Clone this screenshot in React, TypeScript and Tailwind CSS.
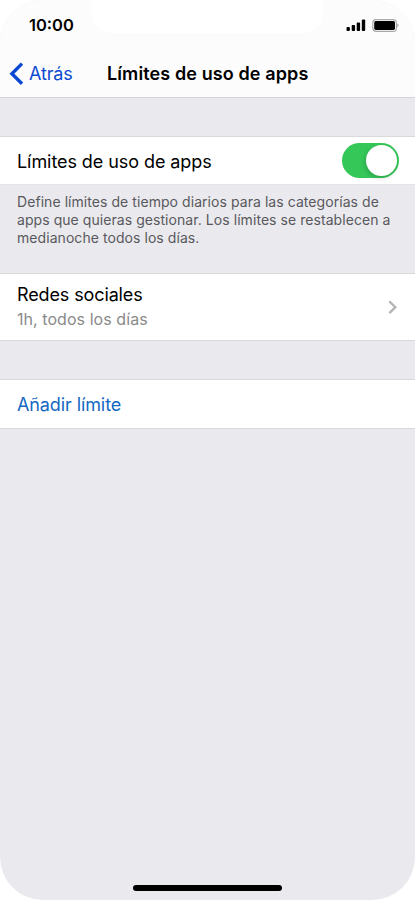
import React from "react";

function StatusBar() {
  return (
    <div className="flex h-[50px] items-center justify-between pl-[29px] pr-[16px]">
      <span className="text-[16.5px] font-semibold leading-5 text-black">10:00</span>
      <div className="flex items-center gap-[6px]">
        <svg width="20" height="12" viewBox="0 0 20 12" fill="#000">
          <rect x="0.5" y="8" width="3.4" height="4" rx="1" />
          <rect x="5.7" y="6" width="3.4" height="6" rx="1" />
          <rect x="10.7" y="3.5" width="3.4" height="8.5" rx="1" />
          <rect x="15.8" y="0.6" width="3.4" height="11.4" rx="1" />
        </svg>
        <svg width="27" height="13" viewBox="0 0 27 13" fill="none">
          <rect x="0.8" y="0.7" width="23.6" height="11.6" rx="3.4" stroke="#a9a9a9" strokeWidth="1.2" />
          <rect x="2.2" y="2.1" width="20.8" height="8.8" rx="1.6" fill="#000" />
          <path d="M25.4 4.6c1.6.6 1.6 3.2 0 3.8z" fill="#a0a0a0" />
        </svg>
      </div>
    </div>
  );
}

function NavBar() {
  return (
    <div className="grid h-[47px] grid-cols-[107px_1fr] items-center">
      <button className="flex items-center gap-[5px] pl-[9px] text-left text-[#0b49d2]">
        <svg width="15" height="24" viewBox="0 0 15 24" fill="none">
          <path d="M13 1.6 2.9 11.7 13 21.8" stroke="currentColor" strokeWidth="3.4" />
        </svg>
        <span className="text-[18px] leading-6 tracking-[-0.15px]">Atrás</span>
      </button>
      <h1 className="whitespace-nowrap text-[18px] font-semibold leading-6 tracking-[0.11px] text-black">Límites de uso de apps</h1>
    </div>
  );
}

function Toggle() {
  return (
    <div role="switch" aria-checked="true" className="flex h-[35px] w-[57px] items-center justify-end rounded-full bg-[#36c759] pr-[2px]">
      <div className="size-[31px] rounded-full bg-white shadow-[-1px_2px_5px_rgba(0,0,0,0.18)]" />
    </div>
  );
}

export default function App() {
  return (
    <div className="h-[900px] w-[415px] overflow-hidden bg-white font-['Inter','Liberation_Sans',sans-serif]">
      <div className="relative flex h-full flex-col overflow-hidden rounded-[43px] bg-[#eae9ee]">
        <header className="h-[98px] border-b border-[#d5d5d9] bg-[#fcfcfc]">
          <div className="absolute left-[92px] top-0 h-[33px] w-[231px] rounded-b-[20px] bg-white" />
          <div className="relative">
            <StatusBar />
            <NavBar />
          </div>
        </header>
        <section className="mt-[38px] flex h-[49px] items-center justify-between border-y border-t-[#d9d9dc] border-b-[#e4e4e8] bg-white pl-[17px] pr-[16px]">
          <span className="whitespace-nowrap pt-[2px] text-[18px] leading-6 tracking-[-0.07px] text-black">Límites de uso de apps</span>
          <Toggle />
        </section>
        <p className="ml-[17px] mt-[8px] whitespace-nowrap text-[14px] leading-[18px] tracking-[0.06px] text-[#59595d]">
          <span className="block">Define límites de tiempo diarios para las categorías de</span>
          <span className="block">apps que quieras gestionar. Los límites se restablecen a</span>
          <span className="block">medianoche todos los días.</span>
        </p>
        <section className="mt-[26px] flex h-[68px] items-center justify-between border-y border-[#d9d9dc] bg-white pl-[17px] pr-[17px]">
          <div>
            <div className="text-[18px] leading-6 tracking-[-0.12px] text-black">Redes sociales</div>
            <div className="text-[16px] leading-6 tracking-[0.06px] text-[#8a8a8a]">1h, todos los días</div>
          </div>
          <svg width="10" height="15" viewBox="0 0 10 15" fill="none">
            <path d="M1.3 1.3 7.4 7.2 1.3 13.1" stroke="#b5b5b8" strokeWidth="2.3" />
          </svg>
        </section>
        <section className="mt-[38px] flex h-[50px] items-center border-y border-[#d9d9dc] bg-white pl-[17px] pt-[2px]">
          <button className="text-[18px] leading-6 tracking-[-0.1px] text-[#1368c2]">Añadir límite</button>
        </section>
        <div className="mb-[9px] mt-auto h-[6px] w-[149px] self-center rounded-full bg-black" />
      </div>
    </div>
  );
}
